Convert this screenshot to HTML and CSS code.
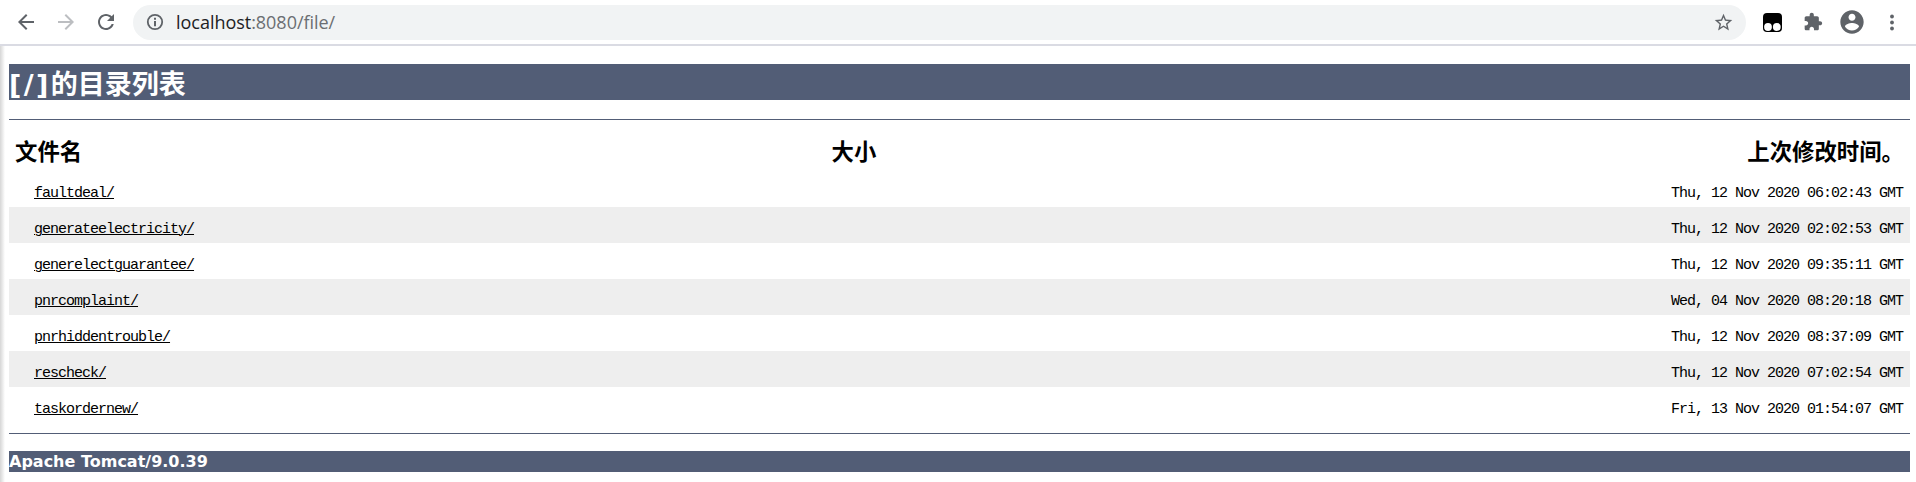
FILE: index.html
```html
<!DOCTYPE html>
<html lang="zh-CN">
<head>
<meta charset="utf-8">
<title>[/]的目录列表</title>
<link rel="stylesheet" href="styles.css">
</head>
<body>
<header class="toolbar">
  <svg class="icon back" viewBox="0 0 24 24"><path d="M20 11H7.83l5.59-5.59L12 4l-8 8 8 8 1.41-1.41L7.83 13H20v-2z"/></svg>
  <svg class="icon forward" viewBox="0 0 24 24"><path d="M12 4l-1.41 1.41L16.17 11H4v2h12.17l-5.58 5.59L12 20l8-8z"/></svg>
  <svg class="icon reload" viewBox="0 0 24 24"><path d="M17.65 6.35C16.2 4.9 14.21 4 12 4c-4.42 0-7.99 3.58-7.99 8s3.57 8 7.99 8c3.73 0 6.84-2.55 7.73-6h-2.08c-.82 2.33-3.04 4-5.65 4-3.31 0-6-2.69-6-6s2.69-6 6-6c1.66 0 3.14.69 4.22 1.78L13 11h7V4l-2.35 2.35z"/></svg>
  <div class="omnibox">
    <svg class="info" viewBox="0 0 20 20"><circle class="ring" cx="10" cy="10" r="7.200"/><path d="M9 5.700h2v2H9zM9 9h2v5.200H9z"/></svg>
    <div class="url"><span class="host">localhost</span>:8080/file/</div>
    <svg class="star" viewBox="0 0 24 24"><path d="M22 9.240l-7.190-.62L12 2 9.190 8.630 2 9.240l5.460 4.730L5.820 21 12 17.270 18.180 21l-1.630-7.030L22 9.240zM12 15.400l-3.760 2.270 1-4.280-3.320-2.880 4.380-.38L12 6.100l1.710 4.040 4.380.38-3.320 2.880 1 4.280L12 15.400z"/></svg>
  </div>
  <svg class="monkey" viewBox="0 0 19 19"><rect width="19" height="19" rx="4"/><circle class="eye" cx="5" cy="14" r="3.900"/><circle class="eye" cx="13.800" cy="14" r="3.900"/></svg>
  <svg class="puzzle" viewBox="0 0 24 24"><path d="M20.500 11H19V7c0-1.100-.9-2-2-2h-4V3.500C13 2.120 11.880 1 10.500 1S8 2.120 8 3.500V5H4c-1.100 0-1.990.9-1.990 2v3.800H3.500c1.490 0 2.700 1.210 2.700 2.700s-1.210 2.700-2.700 2.700H2V20c0 1.100.9 2 2 2h3.800v-1.500c0-1.490 1.210-2.700 2.700-2.700s2.700 1.210 2.700 2.700V22H17c1.100 0 2-.9 2-2v-4h1.500c1.380 0 2.500-1.120 2.500-2.500S21.880 11 20.500 11z"/></svg>
  <svg class="avatar" viewBox="0 0 24 24"><path d="M12 2C6.480 2 2 6.480 2 12s4.480 10 10 10 10-4.480 10-10S17.520 2 12 2zm0 3c1.660 0 3 1.340 3 3s-1.340 3-3 3-3-1.340-3-3 1.340-3 3-3zm0 14.200c-2.500 0-4.710-1.280-6-3.220.03-1.990 4-3.080 6-3.080 1.990 0 5.970 1.090 6 3.080-1.290 1.940-3.500 3.220-6 3.220z"/></svg>
  <svg class="menu" viewBox="0 0 4 16"><circle cx="2" cy="2" r="1.900"/><circle cx="2" cy="8" r="1.900"/><circle cx="2" cy="14" r="1.900"/></svg>
</header>
<main class="page">
  <h1 class="title"><span class="path">[/]</span>的目录列表</h1>
  <hr class="rule">
  <table class="listing">
    <thead>
      <tr><th class="name">文件名</th><th class="size">大小</th><th class="date">上次修改时间。</th></tr>
    </thead>
    <tbody>
      <tr><td class="name"><a href="#">faultdeal/</a></td><td></td><td class="date">Thu, 12 Nov 2020 06:02:43 GMT</td></tr>
      <tr><td class="name"><a href="#">generateelectricity/</a></td><td></td><td class="date">Thu, 12 Nov 2020 02:02:53 GMT</td></tr>
      <tr><td class="name"><a href="#">generelectguarantee/</a></td><td></td><td class="date">Thu, 12 Nov 2020 09:35:11 GMT</td></tr>
      <tr><td class="name"><a href="#">pnrcomplaint/</a></td><td></td><td class="date">Wed, 04 Nov 2020 08:20:18 GMT</td></tr>
      <tr><td class="name"><a href="#">pnrhiddentrouble/</a></td><td></td><td class="date">Thu, 12 Nov 2020 08:37:09 GMT</td></tr>
      <tr><td class="name"><a href="#">rescheck/</a></td><td></td><td class="date">Thu, 12 Nov 2020 07:02:54 GMT</td></tr>
      <tr><td class="name"><a href="#">taskordernew/</a></td><td></td><td class="date">Fri, 13 Nov 2020 01:54:07 GMT</td></tr>
    </tbody>
  </table>
  <hr class="rule rule-bottom">
  <h3 class="server">Apache Tomcat/9.0.39</h3>
</main>
</body>
</html>
```
FILE: styles.css
```css
* { box-sizing: border-box; }
html { overflow: hidden; }
body { margin: 0; height: 482px; overflow: hidden; background: #fff; color: #000; }
svg { display: block; flex: none; fill: #5f6368; }

.toolbar { display: flex; align-items: center; height: 46px; padding: 0 22px 1px 14px; border-bottom: 2px solid #dadbe3; }
.icon { width: 24px; height: 24px; margin-right: 16px; }
.forward { fill: #bcbec1; }
.reload { margin-right: 15px; }
.omnibox { display: flex; align-items: center; width: 1613px; height: 35px; margin-top: 1px; padding: 0 12px; border-radius: 18px; background: #f1f3f4; }
.info { width: 20px; height: 20px; }
.ring { fill: none; stroke: #5f6368; stroke-width: 1.800px; }
.url { flex: 1; padding-left: 11px; font: 18px/34px "Open Sans", sans-serif; letter-spacing: -0.030px; color: #6b6e72; }
.host { color: #202124; }
.star { width: 21px; height: 21px; }
.monkey { width: 19px; height: 19px; margin: 1px 0 0 17px; fill: #000; }
.eye { fill: #fff; }
.puzzle { width: 20px; height: 20px; margin-left: 21px; }
.avatar { width: 28px; height: 28px; margin-left: 15px; }
.menu { width: 4px; height: 17px; margin: 1px 0 0 auto; }

.page { height: 436px; padding: 18px 6px 0 9px; background: linear-gradient(to right, #d6d6d6 0, #e6e6e6 2px, #fff 5px) no-repeat; }
.title { height: 36px; margin: 0; font: bold 27px/38px "Noto Sans CJK SC", sans-serif; color: #fff; background: #525d76; }
.path { font-family: "DejaVu Sans", sans-serif; letter-spacing: 2.400px; }
.rule { height: 1px; margin: 19px 0 0; border: 0; background: #525d76; }
.rule-bottom { margin-top: 10px; }

.listing { width: 100%; margin-top: 8px; border-collapse: collapse; table-layout: fixed; }
.listing th { height: 43px; padding: 1px 6px 0; font: bold 22.400px/30px "Noto Sans CJK SC", sans-serif; text-align: center; }
.listing th.name { width: 760px; text-align: left; }
.listing th.size { width: 170px; }
.listing th.date { text-align: right; }
.listing td { height: 36px; padding: 10px 7px 0 25px; font: 15px/20px "Liberation Mono", monospace; letter-spacing: -1px; vertical-align: middle; }
.listing td.date { text-align: right; }
.listing tbody tr:nth-child(even) { background: #eee; }
.listing a { color: #000; text-decoration: underline; text-decoration-thickness: 1px; text-underline-offset: 1px; }

.server { height: 21px; margin: 17px 0 0; font: bold 16px/22px "DejaVu Sans", sans-serif; color: #fff; background: #525d76; }
```
